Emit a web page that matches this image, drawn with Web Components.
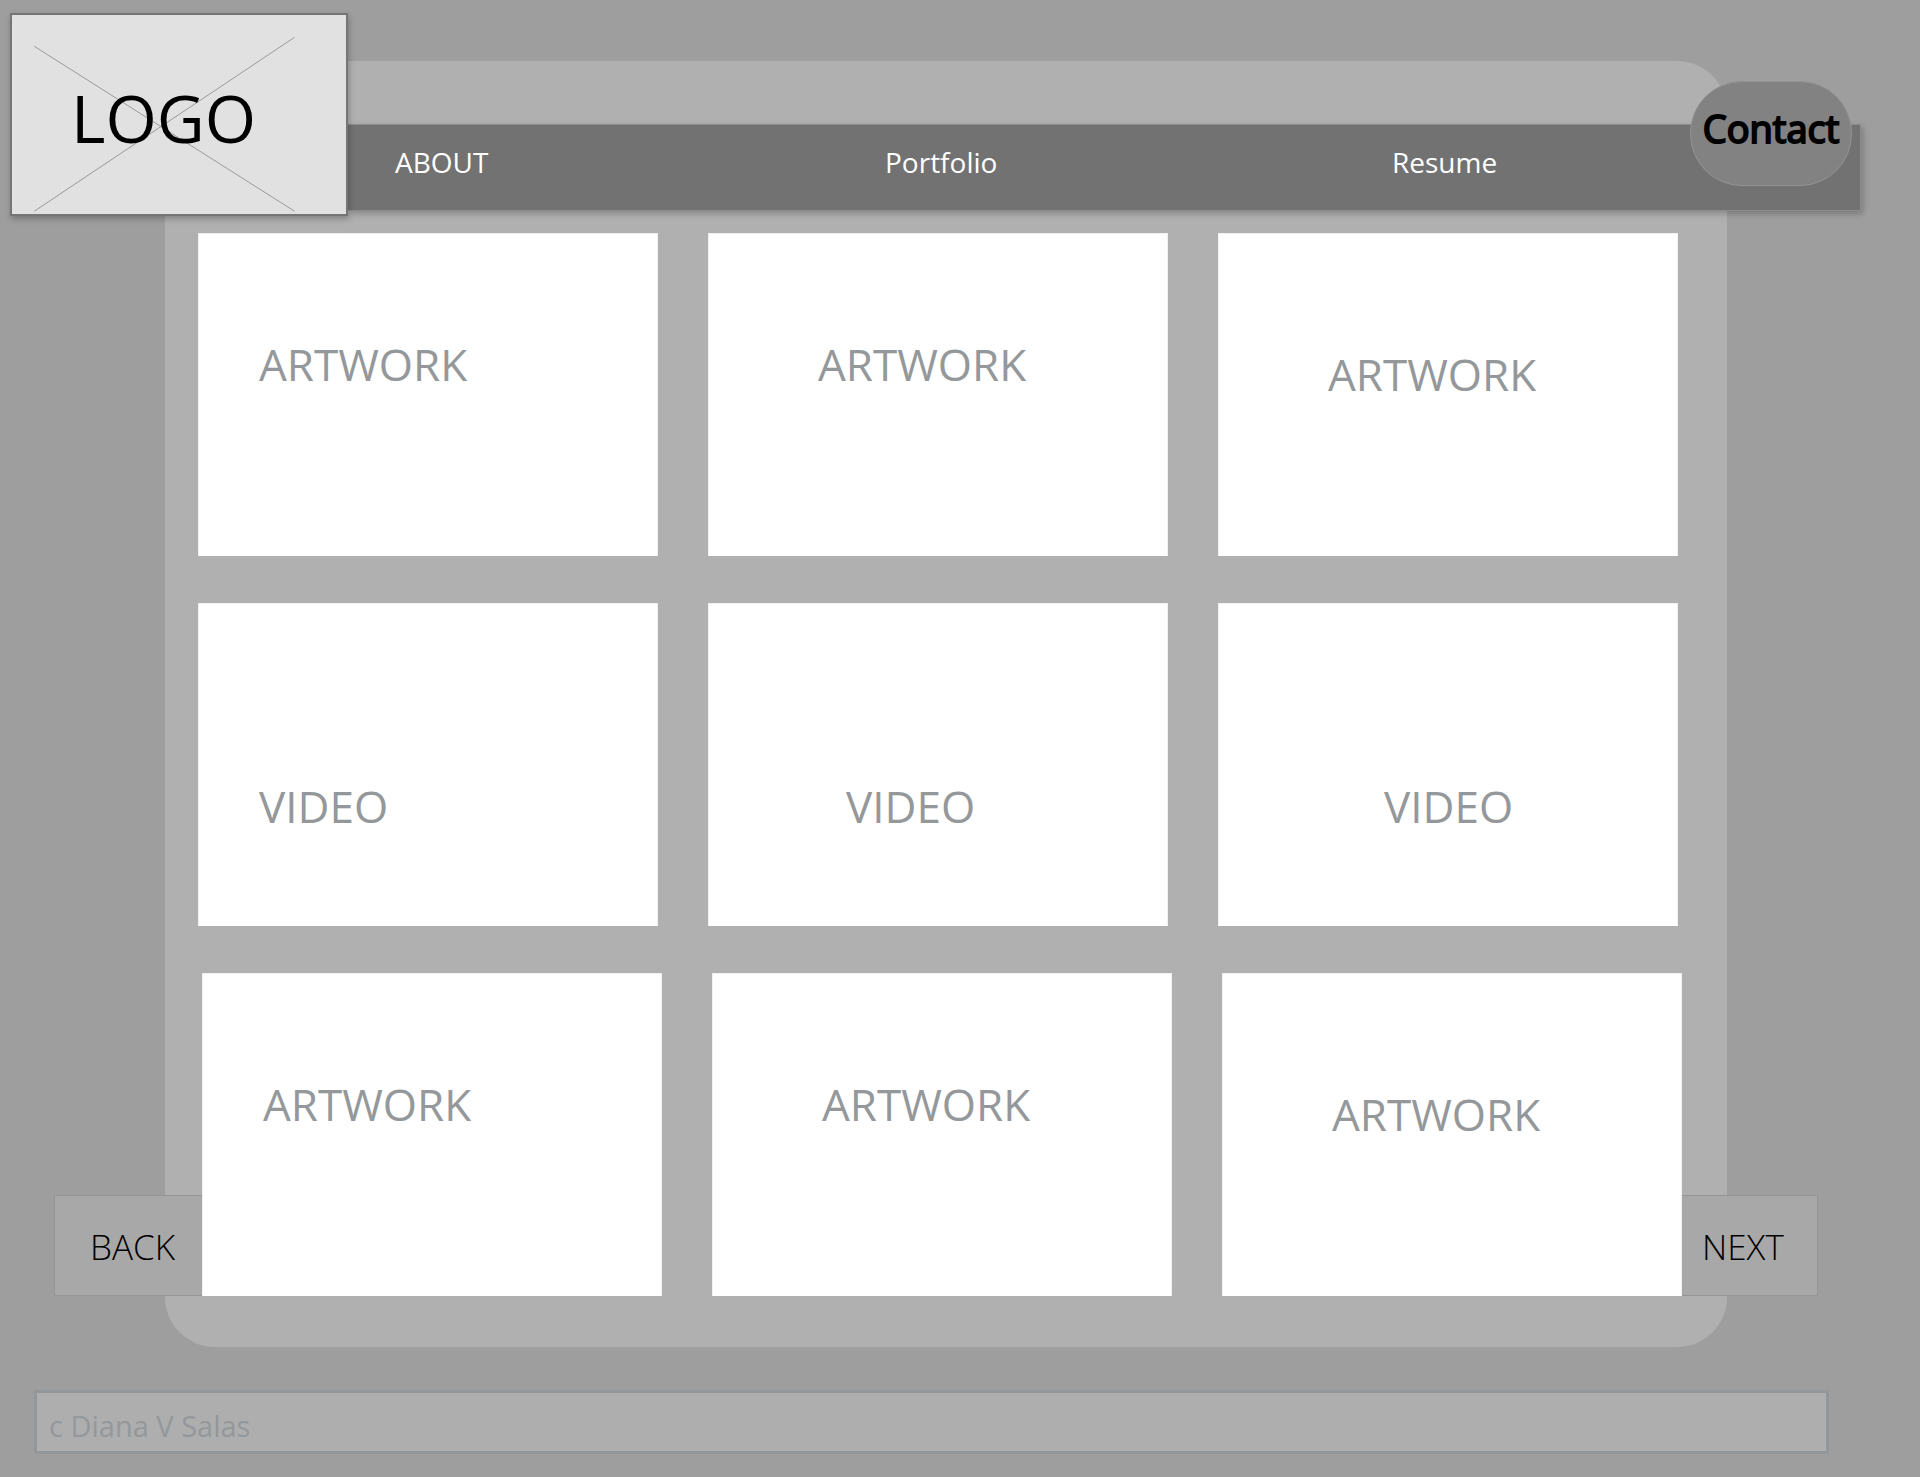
<!DOCTYPE html>
<html lang="en">
<head>
<meta charset="utf-8">
<title>Portfolio</title>
<style>
  body { margin: 0; background: #9e9e9e; font-family: "Open Sans", "Noto Sans", sans-serif; }
</style>
</head>
<body>
<portfolio-page></portfolio-page>

<template id="logo-tpl">
  <style>
    :host { display: block; position: relative; z-index: 1; flex: none; box-sizing: border-box; width: 338px; height: 203px;
      background: #e1e1e1; border: 2px solid #757575; box-shadow: 1px 3px 6px rgba(0,0,0,.25); }
    a { display: block; padding: 57px 0 0 59px; color: #000; text-decoration: none; font-size: 66px; line-height: 90px; }
    svg { position: absolute; left: 0; top: 0; z-index: -1; }
  </style>
  <svg width="334" height="199" viewBox="12 15 334 199" fill="none" stroke="#9a9a9a" aria-hidden="true">
    <path d="M34.3 46.3 294.5 211.2M34.3 211.2 294.5 37.3"/>
  </svg>
  <a href="#"><slot></slot></a>
</template>

<template id="nav-tpl">
  <style>
    :host { display: block; flex: 1; position: relative; box-sizing: border-box; height: 87px; background: #727272;
      border: solid #8c8c8c; border-width: 1px 1px 1px 0; box-shadow: 2px 3px 6px rgba(0,0,0,.22); }
    nav { display: grid; grid-template-columns: 490fr 507fr 468fr; padding: 18px 0 0 47px; font-size: 28px; line-height: 38px; }
    ::slotted(a) { color: #fff; text-decoration: none; }
  </style>
  <nav><slot></slot></nav>
  <slot name="badge"></slot>
</template>

<template id="contact-tpl">
  <style>
    :host { display: block; position: absolute; right: 8px; top: -44px; }
    button { box-sizing: border-box; width: 162px; height: 105px; padding: 0 0 12px; border: 1px solid #939393; border-radius: 52px;
      background: #828282; color: #000; font: 400 38px/52px "Open Sans", "Noto Sans", sans-serif; -webkit-text-stroke: 2px #000; }
  </style>
  <button type="button"><slot></slot></button>
</template>

<template id="header-tpl">
  <style>
    :host { display: block; }
    header { display: flex; align-items: flex-start; padding: 13px 59px 0 10px; }
    site-nav { margin-top: 111px; }
  </style>
  <header>
    <site-logo>LOGO</site-logo>
    <site-nav>
      <a href="#about">ABOUT</a><a href="#portfolio">Portfolio</a><a href="#resume">Resume</a>
      <contact-button slot="badge">Contact</contact-button>
    </site-nav>
  </header>
</template>

<template id="card-tpl">
  <style>
    :host { display: block; box-sizing: border-box; aspect-ratio: 460 / 323; background: #fff; border: 1px solid #f0f0f0; border-bottom-color: #fff;
      color: #94989b; font-size: 44px; line-height: 60px; padding: 100px 0 0 109px; }
    :host([kind="video"]) { padding-top: 172px; }
    :host([indent="small"]) { padding-left: 60px; }
    :host([indent="large"]) { padding-left: 137px; }
    :host([indent="wide"]) { padding-left: 165px; }
    :host([low]) { padding-top: 110px; }
  </style>
  <slot></slot>
</template>

<template id="row-tpl">
  <style>
    :host { display: grid; grid-template-columns: repeat(3, minmax(0, 1fr)); gap: 50px; }
  </style>
  <slot></slot>
</template>

<template id="pager-tpl">
  <style>
    :host { display: block; flex: none; }
    button { display: block; box-sizing: border-box; width: 100%; height: 101px; padding: 2px 0 0 35px; border: 1px solid #959595; border-right: 0;
      background: #a8a8a8; color: #000; text-align: left; font: 300 35px/46px "Open Sans", "Noto Sans", sans-serif; }
    :host([direction="next"]) button { padding-left: 20px; border-width: 1px 1px 1px 0; border-right: 1px solid #959595; }
  </style>
  <button type="button"><slot></slot></button>
</template>

<template id="gallery-tpl">
  <style>
    :host { display: block; background: #b0b0b0; border-radius: 50px; }
    main { display: flex; flex-direction: column; gap: 47px; padding: 172px 0 51px; }
    main > gallery-row { margin: 0 49px 0 33px; }
    .paged { display: flex; align-items: flex-end; margin: 0 -91px 0 -111px; }
    .paged gallery-row { flex: 1; }
    .back { width: 148px; }
    .next { width: 136px; }
  </style>
  <main>
    <gallery-row>
      <gallery-card indent="small">ARTWORK</gallery-card>
      <gallery-card>ARTWORK</gallery-card>
      <gallery-card low>ARTWORK</gallery-card>
    </gallery-row>
    <gallery-row>
      <gallery-card kind="video" indent="small">VIDEO</gallery-card>
      <gallery-card kind="video" indent="large">VIDEO</gallery-card>
      <gallery-card kind="video" indent="wide">VIDEO</gallery-card>
    </gallery-row>
    <div class="paged">
      <pager-button class="back" direction="back">BACK</pager-button>
      <gallery-row>
        <gallery-card indent="small">ARTWORK</gallery-card>
        <gallery-card>ARTWORK</gallery-card>
        <gallery-card low>ARTWORK</gallery-card>
      </gallery-row>
      <pager-button class="next" direction="next">NEXT</pager-button>
    </div>
  </main>
</template>

<template id="footer-tpl">
  <style>
    :host { display: block; }
    footer { padding: 14px 12px 6px; border: 3px solid #94979a; background: #aeaeae; color: #94989b; font-size: 29px; line-height: 38px; }
  </style>
  <footer><slot></slot></footer>
</template>

<template id="page-tpl">
  <style>
    :host { display: block; }
    .stage { display: grid; grid-template-columns: minmax(0, 1fr); align-items: start; }
    .stage > * { grid-area: 1 / 1; }
    site-header { z-index: 1; }
    gallery-panel { margin: 61px 193px 0 165px; }
    site-footer { margin: 43px 91px 23px 34px; }
  </style>
  <div class="stage">
    <site-header></site-header>
    <gallery-panel></gallery-panel>
  </div>
  <site-footer>c Diana V Salas</site-footer>
</template>

<script>
  const register = (name, templateId) => {
    customElements.define(name, class extends HTMLElement {
      constructor() {
        super();
        this.attachShadow({ mode: "open" })
          .append(document.getElementById(templateId).content.cloneNode(true));
      }
    });
  };
  register("site-logo", "logo-tpl");
  register("contact-button", "contact-tpl");
  register("site-nav", "nav-tpl");
  register("site-header", "header-tpl");
  register("gallery-card", "card-tpl");
  register("gallery-row", "row-tpl");
  register("pager-button", "pager-tpl");
  register("gallery-panel", "gallery-tpl");
  register("site-footer", "footer-tpl");
  register("portfolio-page", "page-tpl");
</script>
</body>
</html>
